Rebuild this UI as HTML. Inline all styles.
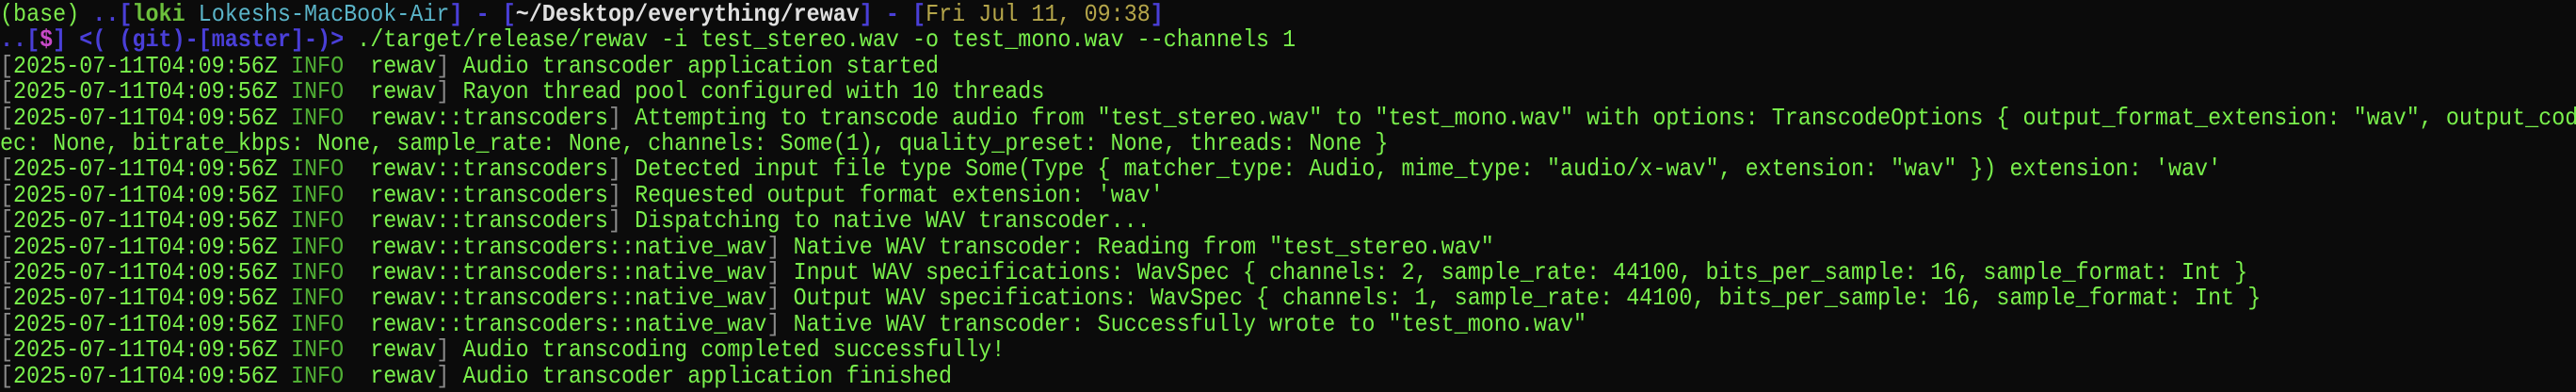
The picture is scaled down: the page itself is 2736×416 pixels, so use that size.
<!DOCTYPE html>
<html><head><meta charset="utf-8"><style>
html,body{margin:0;padding:0;background:#0b0b0b;width:2736px;height:416px;overflow:hidden}
pre{margin:0;padding:2px 0 0 0;font-family:"Liberation Mono","DejaVu Sans Mono",monospace;font-size:26px;line-height:27.4px;color:#7af04c;white-space:pre;transform:scaleX(0.9);transform-origin:0 0}
.g{color:#7cea4c}.b{color:#4a3fd8;font-weight:bold}.l{color:#6cc03c;font-weight:bold}.h{color:#5ab4c8}
.w{color:#e0e0e0;font-weight:bold}.d{color:#b5a64a}.m{color:#c84ac8;font-weight:bold}
.k{color:#8a8a8a}.i{color:#4fae34}
</style></head><body><pre><span class="g">(base)</span> <span class="b">..[</span><span class="l">loki</span> <span class="h">Lokeshs-MacBook-Air</span><span class="b">]</span> <span class="b">-</span> <span class="b">[</span><span class="w">~/Desktop/everything/rewav</span><span class="b">]</span> <span class="b">-</span> <span class="b">[</span><span class="d">Fri Jul 11, 09:38</span><span class="b">]</span>
<span class="b">..[</span><span class="m">$</span><span class="b">]</span> <span class="b">&lt;( (git)-[master]-)&gt;</span> ./target/release/rewav -i test_stereo.wav -o test_mono.wav --channels 1
<span class="k">[</span>2025-07-11T04:09:56Z <span class="i">INFO</span>  rewav<span class="k">]</span> Audio transcoder application started
<span class="k">[</span>2025-07-11T04:09:56Z <span class="i">INFO</span>  rewav<span class="k">]</span> Rayon thread pool configured with 10 threads
<span class="k">[</span>2025-07-11T04:09:56Z <span class="i">INFO</span>  rewav::transcoders<span class="k">]</span> Attempting to transcode audio from "test_stereo.wav" to "test_mono.wav" with options: TranscodeOptions { output_format_extension: "wav", output_cod
ec: None, bitrate_kbps: None, sample_rate: None, channels: Some(1), quality_preset: None, threads: None }
<span class="k">[</span>2025-07-11T04:09:56Z <span class="i">INFO</span>  rewav::transcoders<span class="k">]</span> Detected input file type Some(Type { matcher_type: Audio, mime_type: "audio/x-wav", extension: "wav" }) extension: 'wav'
<span class="k">[</span>2025-07-11T04:09:56Z <span class="i">INFO</span>  rewav::transcoders<span class="k">]</span> Requested output format extension: 'wav'
<span class="k">[</span>2025-07-11T04:09:56Z <span class="i">INFO</span>  rewav::transcoders<span class="k">]</span> Dispatching to native WAV transcoder...
<span class="k">[</span>2025-07-11T04:09:56Z <span class="i">INFO</span>  rewav::transcoders::native_wav<span class="k">]</span> Native WAV transcoder: Reading from "test_stereo.wav"
<span class="k">[</span>2025-07-11T04:09:56Z <span class="i">INFO</span>  rewav::transcoders::native_wav<span class="k">]</span> Input WAV specifications: WavSpec { channels: 2, sample_rate: 44100, bits_per_sample: 16, sample_format: Int }
<span class="k">[</span>2025-07-11T04:09:56Z <span class="i">INFO</span>  rewav::transcoders::native_wav<span class="k">]</span> Output WAV specifications: WavSpec { channels: 1, sample_rate: 44100, bits_per_sample: 16, sample_format: Int }
<span class="k">[</span>2025-07-11T04:09:56Z <span class="i">INFO</span>  rewav::transcoders::native_wav<span class="k">]</span> Native WAV transcoder: Successfully wrote to "test_mono.wav"
<span class="k">[</span>2025-07-11T04:09:56Z <span class="i">INFO</span>  rewav<span class="k">]</span> Audio transcoding completed successfully!
<span class="k">[</span>2025-07-11T04:09:56Z <span class="i">INFO</span>  rewav<span class="k">]</span> Audio transcoder application finished</pre></body></html>
